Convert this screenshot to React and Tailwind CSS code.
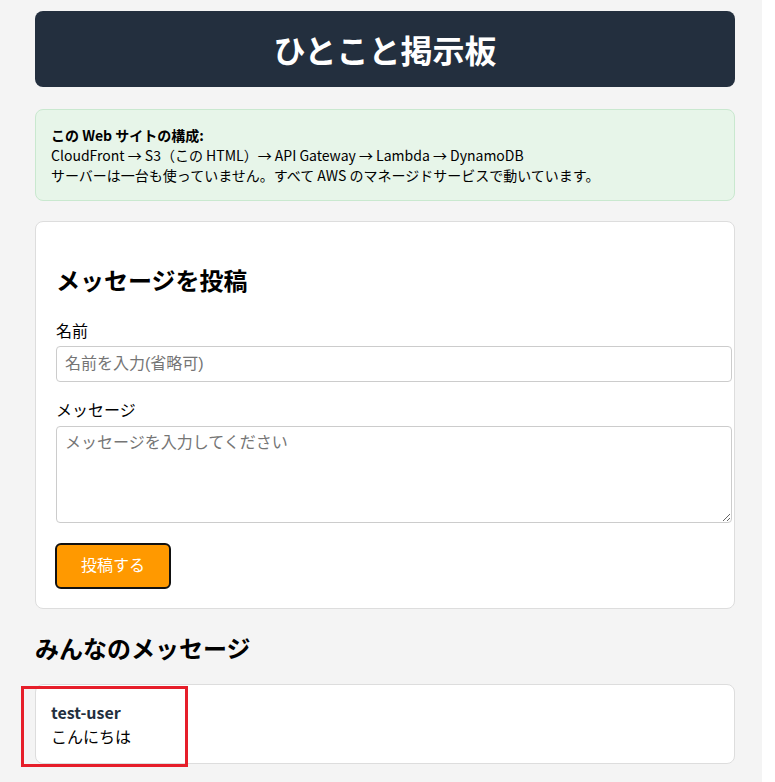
import React, { useState } from "react";

const jp = "font-['Noto_Sans_CJK_JP',sans-serif]";
const formFont = "font-['Liberation_Sans','Noto_Sans_CJK_JP',sans-serif]";

export default function App() {
  const [name, setName] = useState("");
  const [message, setMessage] = useState("");
  const [messages] = useState([{ id: 1, name: "test-user", message: "こんにちは" }]);

  return (
    <div className={`${jp} relative w-[762px] min-h-[782px] bg-[#f4f4f4] text-black pt-[11px] pl-[35px]`}>
      <div className="w-[700px]">
        {/* Title bar */}
        <header className="h-[76px] rounded-lg bg-[#232f3e] flex items-center justify-center">
          <h1 className="text-[32px] font-bold text-white leading-[48px]">ひとこと掲示板</h1>
        </header>

        {/* Architecture note */}
        <div className="mt-[22px] rounded-lg border border-[#c9e8cf] bg-[#e7f5e9] pl-[15px] pt-[15px] pb-[15px] text-[14px] leading-[20px]">
          <div className="font-bold">この Web サイトの構成:</div>
          <div>CloudFront → S3（この HTML）→ API Gateway → Lambda → DynamoDB</div>
          <div>サーバーは一台も使っていません。すべて AWS のマネージドサービスで動いています。</div>
        </div>

        {/* Post form */}
        <div className="mt-[20px] rounded-lg border border-[#dddddd] bg-white px-5 pb-[19px] pt-5">
          <h2 className="mt-5 mb-5 text-2xl font-bold leading-9">メッセージを投稿</h2>
          <label className="block text-base leading-6 mb-1">名前</label>
          <input
            type="text"
            value={name}
            onChange={(e) => setName(e.target.value)}
            placeholder="名前を入力(省略可)"
            className={`${formFont} block w-[676px] h-9 px-2 rounded border border-[#cccccc] text-base text-black placeholder:text-[#757575] outline-none`}
          />
          <label className="block text-base leading-6 mt-[15px] mb-[5px]">メッセージ</label>
          <textarea
            value={message}
            onChange={(e) => setMessage(e.target.value)}
            placeholder="メッセージを入力してください"
            className={`${formFont} block w-[676px] h-[97px] px-2 py-[6px] rounded border border-[#cccccc] text-base leading-[20px] text-black placeholder:text-[#757575] outline-none`}
          />
          <button
            className={`${formFont} mt-5 -ml-px w-[116px] h-[46px] rounded-md border-2 border-[#111111] bg-[#ff9900] text-base text-white`}
          >
            投稿する
          </button>
        </div>

        {/* Message list */}
        <h2 className="mt-[21px] mb-[18px] text-2xl font-bold leading-9">みんなのメッセージ</h2>
        <ul>
          {messages.map((m) => (
            <li key={m.id} className="rounded-lg border border-[#dddddd] bg-white px-[15px] py-[15px] text-base leading-6">
              <div className="font-bold text-[#232f3e]">{m.name}</div>
              <div>{m.message}</div>
            </li>
          ))}
        </ul>
      </div>

      {/* highlight box around the first post */}
      <div className="absolute left-[21px] top-[686px] w-[167px] h-[81px] border-[3px] border-[#e61e2a] pointer-events-none" />
    </div>
  );
}
